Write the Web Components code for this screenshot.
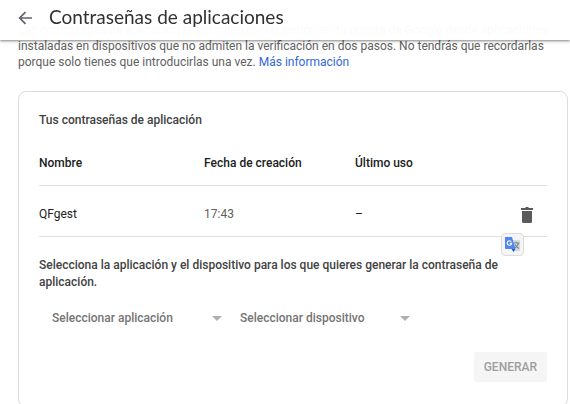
<!DOCTYPE html>
<html lang="es">
<head>
<meta charset="utf-8">
<meta name="viewport" content="width=device-width, initial-scale=1">
<title>Contraseñas de aplicaciones</title>
<style>
    body {
        margin: 0;
        background: #fff;
        color: #616161;
        font: 12px/16px Roboto, "Liberation Sans", sans-serif;
    }
</style>
</head>
<body>
<page-header>Contraseñas de aplicaciones</page-header>
<page-content>
    <intro-text>Las contraseñas de aplicación te permiten iniciar sesión en tu cuenta de Google desde aplicaciones instaladas en dispositivos que no admiten la verificación en dos pasos. No tendrás que recordarlas porque solo tienes que introducirlas una vez.</intro-text>
    <settings-card>
        <span slot="title">Tus contraseñas de aplicación</span>
        <password-table></password-table>
        <password-form></password-form>
    </settings-card>
</page-content>

<script>
class PageHeader extends HTMLElement {
    constructor() {
        super();
        this.attachShadow({ mode: "open" });
    }

    connectedCallback() {
        this.shadowRoot.innerHTML = `
            <style>
                :host {
                    display: block;
                    position: fixed;
                    inset: 0 0 auto 0;
                    z-index: 2;
                }
                header {
                    display: flex;
                    align-items: center;
                    gap: 15px;
                    height: 40px;
                    padding: 0 18px;
                    box-sizing: border-box;
                    background: rgba(255, 255, 255, .97);
                    box-shadow: 0 1px 2px rgba(0, 0, 0, .4), 0 2px 4px rgba(0, 0, 0, .1);
                }
                button {
                    display: flex;
                    padding: 0 0 4px;
                    border: 0;
                    background: none;
                    color: #5f6368;
                }
                h1 {
                    margin: 0;
                    padding-bottom: 6px;
                    color: #303134;
                    font: 400 19px/24px "Google Sans", Lato, sans-serif;
                }
            </style>
            <header>
                <button type="button" aria-label="Atrás">
                    <svg width="16" height="16" viewBox="0 0 16 16" fill="none" stroke="currentColor" stroke-width="1.7">
                        <path d="M14 8H2M7.5 2.2L1.7 8l5.8 5.8"/>
                    </svg>
                </button>
                <h1><slot></slot></h1>
            </header>
        `;
    }
}

class PageContent extends HTMLElement {
    constructor() {
        super();
        this.attachShadow({ mode: "open" });
    }

    connectedCallback() {
        this.shadowRoot.innerHTML = `
            <style>
                :host { display: block; }
                /* scrolled a little under the header */
                main {
                    display: flex;
                    flex-direction: column;
                    gap: 21px;
                    padding: 22px 2px 0 18px;
                }
            </style>
            <main><slot></slot></main>
        `;
    }
}

class IntroText extends HTMLElement {
    constructor() {
        super();
        this.attachShadow({ mode: "open" });
    }

    connectedCallback() {
        this.shadowRoot.innerHTML = `
            <style>
                :host { display: block; }
                p {
                    margin: 0;
                    padding-right: 16px;
                }
                a {
                    color: #3367d6;
                    text-decoration: none;
                }
            </style>
            <p><slot></slot> <a href="#">Más información</a></p>
        `;
    }
}

class SettingsCard extends HTMLElement {
    constructor() {
        super();
        this.attachShadow({ mode: "open" });
    }

    connectedCallback() {
        this.shadowRoot.innerHTML = `
            <style>
                :host { display: block; }
                section {
                    padding: 20px 20px 24px;
                    border: 1px solid #dadce0;
                    border-radius: 8px;
                }
                h2 {
                    margin: 0 0 12px;
                    color: #424242;
                    font-size: 12px;
                    font-weight: 500;
                    line-height: 16px;
                }
            </style>
            <section>
                <h2><slot name="title"></slot></h2>
                <slot></slot>
            </section>
        `;
    }
}

class PasswordTable extends HTMLElement {
    constructor() {
        super();
        this.attachShadow({ mode: "open" });
    }

    connectedCallback() {
        this.shadowRoot.innerHTML = `
            <style>
                :host {
                    display: block;
                    position: relative;
                }
                table {
                    width: 100%;
                    table-layout: fixed;
                    border-collapse: collapse;
                    text-align: left;
                }
                th, td {
                    padding: 0;
                    border-bottom: 1px solid #e0e0e0;
                }
                th {
                    height: 45px;
                    color: #212121;
                    font-weight: 500;
                }
                td {
                    height: 44px;
                    padding-top: 6px;
                }
                th:nth-child(1) { width: 32.5%; }
                th:nth-child(2) { width: 29.7%; }
                .name, .used { color: #212121; }
                .delete {
                    display: flex;
                    margin-left: auto;
                    padding: 2px 12px 0;
                    border: 0;
                    background: none;
                    color: #5a5a5a;
                }
                .translate {
                    display: flex;
                    align-items: center;
                    justify-content: center;
                    position: absolute;
                    right: 23px;
                    bottom: -19px;
                    width: 23px;
                    height: 23px;
                    padding: 0;
                    border: 1px solid #dcdcdc;
                    border-radius: 4px;
                    background: #f5f5f5;
                }
            </style>
            <table>
                <thead>
                    <tr>
                        <th scope="col">Nombre</th>
                        <th scope="col">Fecha de creación</th>
                        <th scope="col">Último uso</th>
                        <th></th>
                    </tr>
                </thead>
                <tbody>
                    <tr>
                        <td class="name">QFgest</td>
                        <td>17:43</td>
                        <td class="used">–</td>
                        <td>
                            <button class="delete" type="button" aria-label="Eliminar">
                                <svg width="16" height="18" viewBox="0 0 16 18" fill="currentColor">
                                    <path d="M2 2h4l1-1h2l1 1h4v2H2zM3 5h10v10.500a1.500 1.500 0 0 1-1.500 1.500h-7A1.500 1.500 0 0 1 3 15.500z"/>
                                </svg>
                            </button>
                        </td>
                    </tr>
                </tbody>
            </table>
            <button class="translate" type="button" aria-label="Traducir">
                <svg width="17" height="17" viewBox="0 0 17 17">
                    <path d="M7 4h8a1 1 0 0 1 1 1v9a1 1 0 0 1-1 1H9z" fill="#d5d8dc"/>
                    <path d="M9.500 7h6M12.500 5.800V7M14.500 7c-.5 2.500-2 4-4 5M11 8.500c.8 1.800 2 3 4 4" fill="none" stroke="#7b8a90" stroke-width="1.200"/>
                    <path d="M1 1h7l3.500 12H2a1 1 0 0 1-1-1z" fill="#4c86ee"/>
                    <path d="M7.500 13h4L9.500 16z" fill="#3054c8"/>
                    <path d="M7.200 5.700A2.200 2.200 0 1 0 7.600 7.300H5.600" fill="none" stroke="#fff" stroke-width="1.100"/>
                </svg>
            </button>
        `;
    }
}

class PasswordForm extends HTMLElement {
    constructor() {
        super();
        this.attachShadow({ mode: "open" });
    }

    connectedCallback() {
        this.render();
        this.setupEventListeners();
    }

    setupEventListeners() {
        const selects = [...this.shadowRoot.querySelectorAll("select")];
        const submit = this.shadowRoot.querySelector(".submit");

        // Both choices are needed before a password can be generated
        selects.forEach((select) => {
            select.addEventListener("change", () => {
                submit.disabled = selects.some((s) => !s.value);
            });
        });
    }

    render() {
        this.shadowRoot.innerHTML = `
            <style>
                :host { display: block; }
                form {
                    display: flex;
                    flex-direction: column;
                    padding-top: 20px;
                }
                p {
                    margin: 0;
                    color: #424242;
                    font-weight: 500;
                    line-height: 17px;
                }
                .fields {
                    display: flex;
                    gap: 12px;
                    padding: 11px 13px 18px;
                }
                .field {
                    display: flex;
                    align-items: center;
                    width: 176px;
                }
                select {
                    appearance: none;
                    flex: 1;
                    min-width: 0;
                    height: 32px;
                    padding: 0;
                    border: 0;
                    background: none;
                    color: #757575;
                    font: inherit;
                    font-weight: 500;
                }
                .field svg { margin-right: 6px; }
                .submit {
                    align-self: flex-end;
                    height: 30px;
                    padding: 0 10px;
                    border: 0;
                    border-radius: 2px;
                    background: #f5f5f5;
                    color: #9e9e9e;
                    font: inherit;
                    font-weight: 500;
                }
            </style>
            <form>
                <p>Selecciona la aplicación y el dispositivo para los que quieres generar la contraseña de aplicación.</p>
                <div class="fields">
                    ${this.field("Seleccionar aplicación", ["Correo", "Calendario", "Contactos"])}
                    ${this.field("Seleccionar dispositivo", ["iPhone", "iPad", "Mac"])}
                </div>
                <button class="submit" type="button" disabled>GENERAR</button>
            </form>
        `;
    }

    field(label, options) {
        return `
            <label class="field">
                <select aria-label="${label}">
                    <option value="">${label}</option>
                    ${options.map((o) => `<option>${o}</option>`).join("")}
                </select>
                <svg width="10" height="5" viewBox="0 0 10 5"><path d="M0 0h10L5 5z" fill="#b0b0b0"/></svg>
            </label>
        `;
    }
}

customElements.define("page-header", PageHeader);
customElements.define("page-content", PageContent);
customElements.define("intro-text", IntroText);
customElements.define("settings-card", SettingsCard);
customElements.define("password-table", PasswordTable);
customElements.define("password-form", PasswordForm);
</script>
</body>
</html>
